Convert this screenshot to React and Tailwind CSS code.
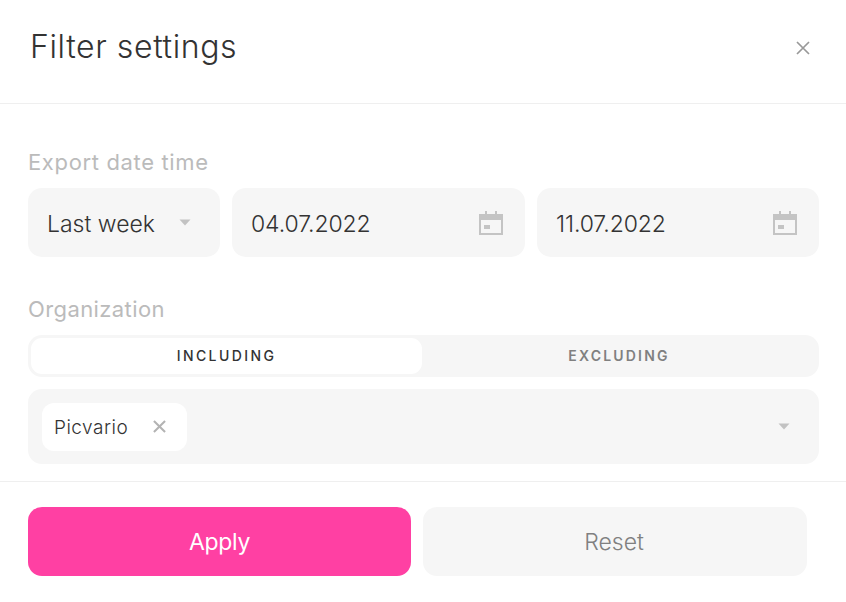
const font = { fontFamily: 'Inter, sans-serif' };

function Caret({ className }) {
  return (
    <svg className={className} width="12" height="7" viewBox="0 0 12 7">
      <path d="M0.5 0.5h11L6 6.5z" fill="#c2c2c2" />
    </svg>
  );
}

function CalendarIcon({ className }) {
  return (
    <svg className={className} width="24" height="24" viewBox="0 0 24 24">
      <path
        fillRule="evenodd"
        d="M0 3h6V0h2v3h8V0h2v3h6v21H0zM2 9v13h20V9z"
        fill="#c4c4c4"
      />
      <rect x="5" y="14" width="6" height="4" fill="#c4c4c4" />
    </svg>
  );
}

function Cross({ size, stroke, color }) {
  return (
    <svg width={size} height={size} viewBox="0 0 14 14" fill="none">
      <path d="M1 1l12 12M13 1L1 13" stroke={color} strokeWidth={stroke} />
    </svg>
  );
}

function DateField({ value, width }) {
  return (
    <div className={`flex h-[69px] items-center justify-between rounded-[14px] bg-[#f6f6f6] pl-[19px] pr-[22px] ${width}`}>
      <span className="pt-[4px] text-[23px] font-light tracking-[-0.1px] text-[#333333]">{value}</span>
      <CalendarIcon />
    </div>
  );
}

export default function App() {
  return (
    <div className="h-[602px] w-[846px] overflow-hidden bg-white" style={font}>
      <header className="flex h-[104px] items-start justify-between border-b border-[#efefef] pl-[30px] pr-[36px]">
        <h1 className="mt-[25px] text-[32px] font-light leading-[44px] tracking-[0.6px] text-[#333333]">Filter settings</h1>
        <button type="button" className="mt-[41px]">
          <Cross size={14} stroke={1.7} color="#999999" />
        </button>
      </header>

      <div className="h-[378px] border-b border-[#efefef] pl-[28px] pr-[27px]">
        <div className="pt-[42px] text-[22px] leading-[32px] tracking-[0.65px] text-[#bbbbbb]">Export date time</div>
        <div className="mt-[10px] flex gap-[12px]">
          <div className="flex h-[69px] w-[192px] items-center justify-between rounded-[14px] bg-[#f6f6f6] pl-[19px] pr-[29px]">
            <span className="pt-[4px] text-[23px] font-light text-[#333333]">Last week</span>
            <Caret />
          </div>
          <DateField value="04.07.2022" width="w-[293px]" />
          <DateField value="11.07.2022" width="w-[282px]" />
        </div>

        <div className="pt-[36px] text-[22px] leading-[32px] tracking-[0.4px] text-[#bbbbbb]">Organization</div>
        <div className="mt-[10px] flex h-[42px] rounded-[14px] bg-[#f6f6f6] p-[3px]">
          <div className="flex w-[391px] items-center justify-center rounded-[11px] bg-white pb-[2px] text-[14px] font-medium tracking-[2.4px] text-[#333333]">INCLUDING</div>
          <div className="flex flex-1 items-center justify-center pb-[2px] text-[14px] font-semibold tracking-[2.2px] text-[#808080]">EXCLUDING</div>
        </div>
        <div className="mt-[12px] flex h-[75px] items-center justify-between rounded-[14px] bg-[#f6f6f6] pl-[14px] pr-[29px]">
          <div className="flex h-[48px] w-[145px] items-center justify-between rounded-[12px] bg-white pl-[12px] pr-[21px]">
            <span className="pt-[3px] text-[19px] font-light tracking-[0.5px] text-[#333333]">Picvario</span>
            <Cross size={13} stroke={2.2} color="#b3b3b3" />
          </div>
          <Caret />
        </div>
      </div>

      <div className="flex gap-[12px] pl-[28px] pt-[25px]">
        <button type="button" className="h-[69px] w-[383px] rounded-[14px] bg-[#ff40a3] pt-[2px] text-[23px] tracking-[-0.3px] text-white">Apply</button>
        <button type="button" className="h-[69px] w-[384px] rounded-[14px] bg-[#f6f6f6] pt-[2px] pr-[2px] text-[23px] font-light text-[#808080]">Reset</button>
      </div>
    </div>
  );
}
